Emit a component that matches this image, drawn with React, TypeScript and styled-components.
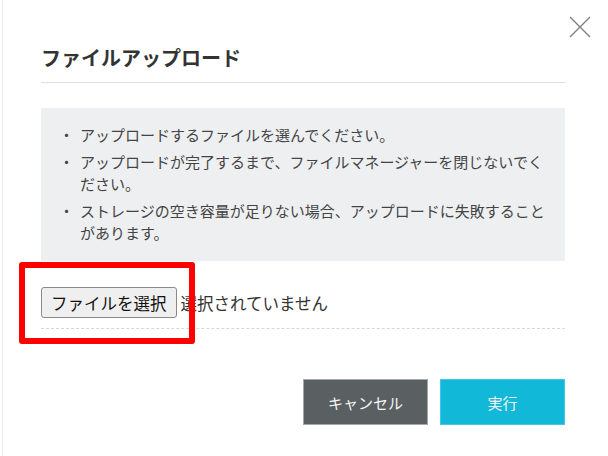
import React from "react";
import styled, { createGlobalStyle } from "styled-components";

const Global = createGlobalStyle`
  html, body { margin: 0; padding: 0; background: #fff; }
  body { font-family: "Noto Sans CJK JP", "Noto Sans", sans-serif; }
  * { box-sizing: border-box; }
`;

const Page = styled.div`
  position: relative;
  width: 608px;
  height: 456px;
  overflow: hidden;
  background: #fff;
`;

const EdgeLine = styled.div`
  position: absolute;
  left: 2px;
  top: 0;
  bottom: 0;
  width: 1px;
  background: #e9e9e9;
`;

const Dialog = styled.div`
  display: flex;
  flex-direction: column;
  padding: 44px 43px 0 41px;
`;

const Header = styled.div`
  padding-bottom: 10px;
  border-bottom: 1px solid #dedede;
`;

const Title = styled.h2`
  margin: 0;
  font-size: 20px;
  line-height: 28px;
  font-weight: 700;
  color: #333;
`;

const CloseButton = styled.button`
  position: absolute;
  top: 16px;
  right: 17px;
  width: 22px;
  height: 22px;
  padding: 0;
  border: 0;
  background: transparent;
  display: flex;
  align-items: center;
  justify-content: center;
`;

const Notice = styled.ul`
  margin: 25px 0 0;
  padding: 16px 15px 17px 18px;
  background: #eeeff1;
  list-style: none;
  display: flex;
  flex-direction: column;
  gap: 5px;
`;

const Item = styled.li`
  display: flex;
  font-size: 15px;
  line-height: 22px;
  color: #444;
`;

const Bullet = styled.span`
  flex: 0 0 21px;
`;

const ItemText = styled.span`
  flex: 1;
`;

const FileRow = styled.div`
  position: relative;
  margin-top: 26px;
  padding-bottom: 10px;
  border-bottom: 1px dashed #d8d8d8;
  display: flex;
  align-items: center;
`;

const FileButton = styled.button`
  height: 31px;
  padding: 0 9px;
  font-family: "Noto Sans CJK JP", sans-serif;
  font-size: 16.5px;
  color: #111;
  background: #efefef;
  border: 1px solid #8a8a8a;
  border-radius: 3px;
`;

const FileStatus = styled.span`
  margin-left: 4px;
  font-size: 16.5px;
  color: #333;
`;

const Highlight = styled.div`
  position: absolute;
  left: -22px;
  top: -25px;
  width: 176px;
  height: 82px;
  border: 6px solid #ff0000;
  border-radius: 3px;
  pointer-events: none;
`;

const Actions = styled.div`
  margin-top: 50px;
  display: flex;
  justify-content: flex-end;
  gap: 12px;
`;

const ActionButton = styled.button<{ $primary?: boolean }>`
  width: 125px;
  height: 46px;
  font-family: "Noto Sans CJK JP", sans-serif;
  font-size: 15px;
  color: #f4f4f4;
  background: ${(p) => (p.$primary ? "#12b8d8" : "#5a6061")};
  border: 1px solid ${(p) => (p.$primary ? "#3fc9e6" : "#a6a9aa")};
`;

const notes = [
  "アップロードするファイルを選んでください。",
  "アップロードが完了するまで、ファイルマネージャーを閉じないでください。",
  "ストレージの空き容量が足りない場合、アップロードに失敗することがあります。",
];

export default function App() {
  return (
    <Page>
      <Global />
      <EdgeLine />
      <CloseButton aria-label="close">
        <svg width="22" height="22" viewBox="0 0 22 22">
          <path d="M1 1 L21 21 M21 1 L1 21" stroke="#808080" strokeWidth="1.4" fill="none" />
        </svg>
      </CloseButton>
      <Dialog>
        <Header>
          <Title>ファイルアップロード</Title>
        </Header>
        <Notice>
          {notes.map((n) => (
            <Item key={n}>
              <Bullet>・</Bullet>
              <ItemText>{n}</ItemText>
            </Item>
          ))}
        </Notice>
        <FileRow>
          <FileButton>ファイルを選択</FileButton>
          <FileStatus>選択されていません</FileStatus>
          <Highlight />
        </FileRow>
        <Actions>
          <ActionButton>キャンセル</ActionButton>
          <ActionButton $primary>実行</ActionButton>
        </Actions>
      </Dialog>
    </Page>
  );
}
